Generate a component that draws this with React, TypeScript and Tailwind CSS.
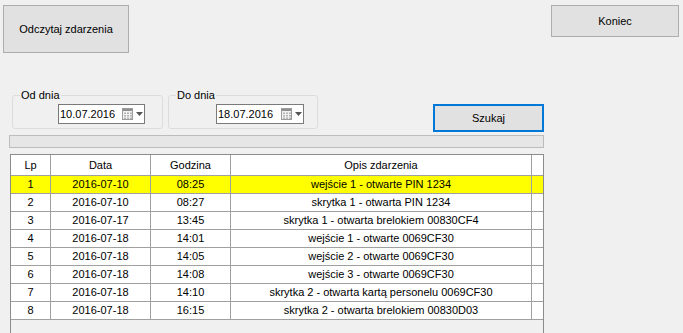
const rows = [
  ["1", "2016-07-10", "08:25", "wejście 1 - otwarte PIN 1234"],
  ["2", "2016-07-10", "08:27", "skrytka 1 - otwarta PIN 1234"],
  ["3", "2016-07-17", "13:45", "skrytka 1 - otwarta brelokiem 00830CF4"],
  ["4", "2016-07-18", "14:01", "wejście 1 - otwarte 0069CF30"],
  ["5", "2016-07-18", "14:05", "wejście 2 - otwarte 0069CF30"],
  ["6", "2016-07-18", "14:08", "wejście 3 - otwarte 0069CF30"],
  ["7", "2016-07-18", "14:10", "skrytka 2 - otwarta kartą personelu 0069CF30"],
  ["8", "2016-07-18", "16:15", "skrytka 2 - otwarta brelokiem 00830D03"],
];

function CalendarIcon() {
  return (
    <svg width="11" height="12" viewBox="0 0 11 12">
      <rect x="0.5" y="0.5" width="10" height="11" fill="#f2f2f2" stroke="#9c9c9c" />
      <rect x="1" y="1" width="9" height="2" fill="#8e8e8e" />
      {[0, 1, 2].map((r) =>
        [0, 1, 2].map((c) => (
          <rect key={`${r}-${c}`} x={2 + c * 3} y={4.5 + r * 2.5} width="2" height="1.5" fill="#b4b4b4" />
        ))
      )}
    </svg>
  );
}

function DatePicker({ value, width }: { value: string; width: string }) {
  return (
    <div className={`${width} h-[20px] bg-white border border-[#7a7a7a] flex items-center justify-between pl-[1px] pr-[1px]`}>
      <span className="text-[11px] leading-none">{value}</span>
      <div className="flex items-center gap-[3px]">
        <CalendarIcon />
        <svg width="7" height="4" viewBox="0 0 7 4">
          <polygon points="0,0 7,0 3.5,4" fill="#555" />
        </svg>
      </div>
    </div>
  );
}

function Group({ label, value, className, boxOffset, boxWidth }: { label: string; value: string; className: string; boxOffset: string; boxWidth: string }) {
  return (
    <div className={`relative h-[34px] border border-[#dcdcdc] rounded-[3px] ${className}`}>
      <span className="absolute left-[7px] top-[-8px] px-[1px] bg-[#f0f0f0] leading-[14px]">{label}</span>
      <div className={`mt-[8px] ${boxOffset}`}>
        <DatePicker value={value} width={boxWidth} />
      </div>
    </div>
  );
}

export default function App() {
  return (
    <div
      className="w-[683px] h-[333px] bg-[#f0f0f0] overflow-hidden flex flex-col text-[11px] text-black"
      style={{ fontFamily: '"Segoe UI", "Liberation Sans", Arial, sans-serif' }}
    >
      <div className="flex justify-between items-start pt-[5px] pl-[3px] pr-[4px]">
        <button className="w-[126px] h-[48px] bg-[#e1e1e1] border border-[#adadad]">Odczytaj zdarzenia</button>
        <button className="w-[128px] h-[32px] bg-[#e1e1e1] border border-[#adadad]">Koniec</button>
      </div>

      <div className="flex items-start h-[37px] mt-[42px] pl-[12px]">
        <Group label="Od dnia" value="10.07.2016" className="w-[151px]" boxOffset="ml-[45px]" boxWidth="w-[87px]" />
        <Group label="Do dnia" value="18.07.2016" className="w-[150px] ml-[5px]" boxOffset="ml-[47px]" boxWidth="w-[88px]" />
        <button className="ml-[115px] mt-[9px] w-[111px] h-[28px] bg-[#e1e1e1] border-2 border-[#0078d7]">Szukaj</button>
      </div>

      <div className="mt-[3px] ml-[9px] w-[535px] h-[13px] bg-[#e6e6e6] border border-[#bcbcbc]" />

      <div className="mt-[6px] ml-[10px] w-[534px] flex-1 border-l border-r border-t border-[#8c8c8c]">
        <div className="grid grid-cols-[40px_100px_80px_301px_1fr] bg-white">
          {["Lp", "Data", "Godzina", "Opis zdarzenia", ""].map((h, i) => (
            <div key={i} className={`h-[21px] flex items-center justify-center border-b border-[#a0a0a0] ${i < 4 ? "border-r" : ""}`}>
              {h}
            </div>
          ))}
        </div>
        {rows.map((r, idx) => (
          <div key={idx} className={`grid grid-cols-[40px_100px_80px_301px_1fr] ${idx === 0 ? "bg-[#ffff00]" : "bg-white"}`}>
            {[...r, ""].map((c, i) => (
              <div key={i} className={`h-[18px] flex items-center justify-center border-b border-[#a0a0a0] whitespace-nowrap ${i < 4 ? "border-r" : ""}`}>
                {c}
              </div>
            ))}
          </div>
        ))}
      </div>
    </div>
  );
}
